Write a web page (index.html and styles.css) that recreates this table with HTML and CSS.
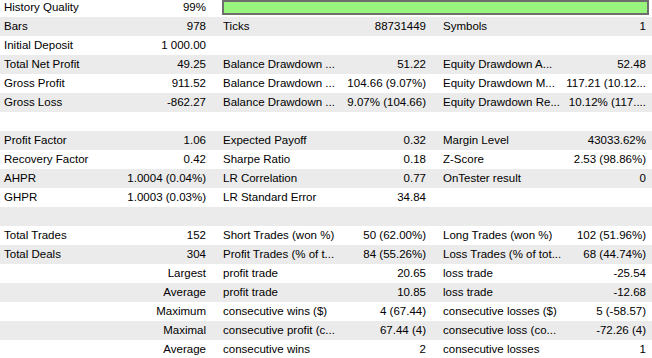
FILE: index.html
```html
<!DOCTYPE html>
<html>
<head>
<meta charset="utf-8">
<link rel="stylesheet" href="styles.css">
</head>
<body>
<div class="report">
  <div class="row">
    <div class="lbl">History Quality</div><div class="val">99%</div>
    <div class="bar"></div>
  </div>
  <div class="row alt">
    <div class="lbl">Bars</div><div class="val">978</div><div></div>
    <div class="lbl">Ticks</div><div class="val">88731449</div><div></div>
    <div class="lbl">Symbols</div><div class="val">1</div>
  </div>
  <div class="row">
    <div class="lbl">Initial Deposit</div><div class="val">1 000.00</div>
  </div>
  <div class="row alt">
    <div class="lbl">Total Net Profit</div><div class="val">49.25</div><div></div>
    <div class="lbl">Balance Drawdown ...</div><div class="val">51.22</div><div></div>
    <div class="lbl">Equity Drawdown A...</div><div class="val">52.48</div>
  </div>
  <div class="row">
    <div class="lbl">Gross Profit</div><div class="val">911.52</div><div></div>
    <div class="lbl">Balance Drawdown ...</div><div class="val">104.66 (9.07%)</div><div></div>
    <div class="lbl">Equity Drawdown M...</div><div class="val">117.21 (10.12...</div>
  </div>
  <div class="row alt">
    <div class="lbl">Gross Loss</div><div class="val">-862.27</div><div></div>
    <div class="lbl">Balance Drawdown ...</div><div class="val">9.07% (104.66)</div><div></div>
    <div class="lbl">Equity Drawdown Re...</div><div class="val">10.12% (117....</div>
  </div>
  <div class="row"></div>
  <div class="row alt">
    <div class="lbl">Profit Factor</div><div class="val">1.06</div><div></div>
    <div class="lbl">Expected Payoff</div><div class="val">0.32</div><div></div>
    <div class="lbl">Margin Level</div><div class="val">43033.62%</div>
  </div>
  <div class="row">
    <div class="lbl">Recovery Factor</div><div class="val">0.42</div><div></div>
    <div class="lbl">Sharpe Ratio</div><div class="val">0.18</div><div></div>
    <div class="lbl">Z-Score</div><div class="val">2.53 (98.86%)</div>
  </div>
  <div class="row alt">
    <div class="lbl">AHPR</div><div class="val">1.0004 (0.04%)</div><div></div>
    <div class="lbl">LR Correlation</div><div class="val">0.77</div><div></div>
    <div class="lbl">OnTester result</div><div class="val">0</div>
  </div>
  <div class="row">
    <div class="lbl">GHPR</div><div class="val">1.0003 (0.03%)</div><div></div>
    <div class="lbl">LR Standard Error</div><div class="val">34.84</div>
  </div>
  <div class="row alt"></div>
  <div class="row">
    <div class="lbl">Total Trades</div><div class="val">152</div><div></div>
    <div class="lbl">Short Trades (won %)</div><div class="val">50 (62.00%)</div><div></div>
    <div class="lbl">Long Trades (won %)</div><div class="val">102 (51.96%)</div>
  </div>
  <div class="row alt">
    <div class="lbl">Total Deals</div><div class="val">304</div><div></div>
    <div class="lbl">Profit Trades (% of t...</div><div class="val">84 (55.26%)</div><div></div>
    <div class="lbl">Loss Trades (% of tot...</div><div class="val">68 (44.74%)</div>
  </div>
  <div class="row">
    <div class="sub">Largest</div><div></div>
    <div class="lbl">profit trade</div><div class="val">20.65</div><div></div>
    <div class="lbl">loss trade</div><div class="val">-25.54</div>
  </div>
  <div class="row alt">
    <div class="sub">Average</div><div></div>
    <div class="lbl">profit trade</div><div class="val">10.85</div><div></div>
    <div class="lbl">loss trade</div><div class="val">-12.68</div>
  </div>
  <div class="row">
    <div class="sub">Maximum</div><div></div>
    <div class="lbl">consecutive wins ($)</div><div class="val">4 (67.44)</div><div></div>
    <div class="lbl">consecutive losses ($)</div><div class="val">5 (-58.57)</div>
  </div>
  <div class="row alt">
    <div class="sub">Maximal</div><div></div>
    <div class="lbl">consecutive profit (c...</div><div class="val">67.44 (4)</div><div></div>
    <div class="lbl">consecutive loss (co...</div><div class="val">-72.26 (4)</div>
  </div>
  <div class="row">
    <div class="sub">Average</div><div></div>
    <div class="lbl">consecutive wins</div><div class="val">2</div><div></div>
    <div class="lbl">consecutive losses</div><div class="val">1</div>
  </div>
</div>
</body>
</html>
```

FILE: styles.css
```css
html, body {
  margin: 0;
  padding: 0;
  background: #ffffff;
}

body {
  font-family: "Liberation Sans", Arial, sans-serif;
  font-size: 11.5px;
  color: #000000;
  overflow: hidden;
}

.report {
  margin-top: -2px;
  width: 652px;
}

.row {
  display: grid;
  grid-template-columns: 116px 90px 17px 122px 81px 17px 122px 81px 6px;
  height: 19px;
  line-height: 19px;
  background: #ffffff;
}

.row.alt {
  background: #ebebeb;
}

.lbl {
  white-space: nowrap;
  overflow: hidden;
}

.row > .lbl:first-child {
  padding-left: 4px;
}

.val {
  text-align: right;
  white-space: nowrap;
  overflow: hidden;
}

.sub {
  grid-column: 1 / span 2;
  text-align: right;
}

.bar {
  grid-column: 3 / span 7;
  margin-left: 16px;
  margin-right: 3px;
  margin-top: 2px;
  height: 15px;
  box-sizing: border-box;
  border: 2px solid #6e6e6e;
  background: #98f47c;
}
```
